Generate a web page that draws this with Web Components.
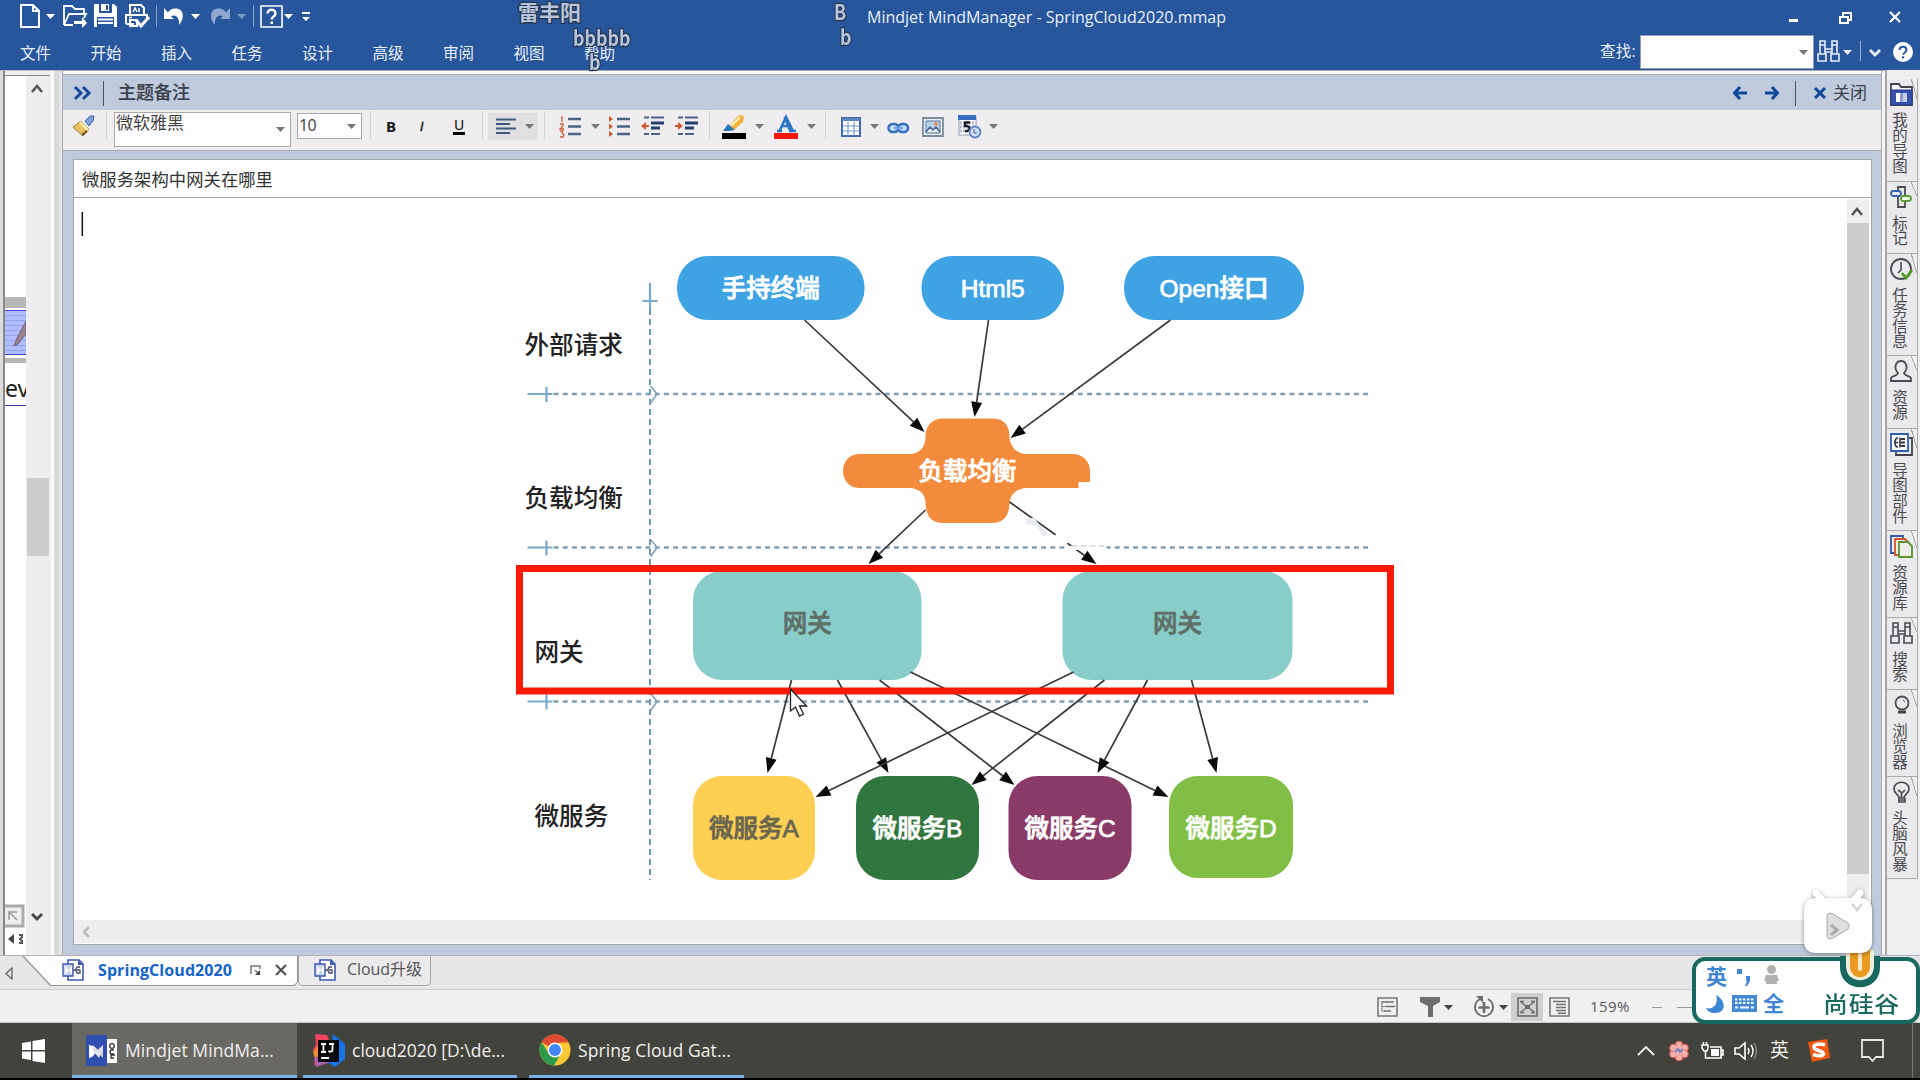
<!DOCTYPE html>
<html lang="zh-CN">
<head>
<meta charset="utf-8">
<title>Mindjet MindManager</title>
<style>
html,body{margin:0;height:1080px;width:1920px;overflow:hidden;background:#e6e6e8}
body{font-family:"Open Sans","Noto Sans CJK SC",sans-serif;position:relative}
</style>
</head>
<body>
<mind-app></mind-app>
<script>
const ICONS={
 newdoc:'<path d="M1 1h12l6 6v16H1zM13 1v6h6" fill="none" stroke="#fff" stroke-width="2"/>',
 car:'<path d="M0 0h9l-4.5 5z" fill="currentColor"/>',
 open:'<path d="M1 21V2h8l3 3h9v4M1 21L6 10h17l-2 4M1 21h9" fill="none" stroke="#fff" stroke-width="1.8"/><path d="M11 17h8v-4l5 6-5 5v-4h-8z" fill="#fff"/>',
 save:'<path d="M0 0h20l3 3v20H0z" fill="#fff"/><path d="M5 0h13v9H5zM3 13h17v10H3z" fill="#27569c"/><path d="M7 0h8v7H7z" fill="#fff"/><path d="M12 1h2v5h-2z" fill="#27569c"/><path d="M4 15.5h15M4 19h15" stroke="#fff" stroke-width="2"/>',
 print:'<path d="M5 11V1h11l3 3v7M1 20v-9h21v5M1 20h8M5 16h7v6H5z" fill="none" stroke="#fff" stroke-width="2"/><path d="M8 8l2-4 2 4M14 4v4M4 13.5h3" stroke="#fff" fill="none" stroke-width="1.5"/><path d="M11 16l5 6 8-9" fill="none" stroke="#fff" stroke-width="3"/>',
 undo:'<path d="M0 1v11h10L7 9.500c4-3 9 1 8 8.500 7-8 4-17-4-16.500-3 0-6 2-7 4z" fill="#fff"/>',
 redo:'<path d="M21 1v11H11l3-2.500c-4-3-9 1-8 8.500C-1 10 2 1 10 1.500c3 0 6 2 7 4z" fill="#8ea8d0"/>',
 help:'<path d="M1 1h21v21H1z" fill="none" stroke="#fff" stroke-width="1.6"/><path d="M7.500 8.500c0-5 8-5 8 0 0 3-3.800 3-3.800 6" fill="none" stroke="#fff" stroke-width="2.400"/><path d="M10.500 16.500h2.500v2.500h-2.500z" fill="#fff"/>',
 cust:'<path d="M0 1h8" stroke="#fff" stroke-width="2"/><path d="M0 5h8L4 9z" fill="#fff"/>',
 min:'<path d="M0 8h9v3H0z" fill="#fff"/>',
 restore:'<path d="M4 4V1h8v7H9M1 5h8v6H1z" fill="none" stroke="#fff" stroke-width="2"/>',
 close:'<path d="M1 1l10 10M11 1L1 11" stroke="currentColor" stroke-width="2.200"/>',
 closeb:'<path d="M1 1l10 10M11 1L1 11" stroke="#0f4798" stroke-width="3"/>',
 bino:'<path d="M3 1h5v4H3zM15 1h5v4h-5zM3 5v9M8 5v9M15 5v9M20 5v9M8 9h7M8 12h7M1 14h8v7H1zM14 14h8v7h-8z" fill="none" stroke="currentColor" stroke-width="1.600"/>',
 vee:'<path d="M1 1l5 5 5-5" fill="none" stroke="currentColor" stroke-width="2.800"/>',
 helpc:'<circle cx="10" cy="10" r="10" fill="#fff"/><path d="M6.500 8c0-4.500 7-4.500 7 0 0 2.500-3.300 2.500-3.300 4.700" fill="none" stroke="#27569c" stroke-width="2"/><path d="M9 14.300h2.200v2.200H9z" fill="#27569c"/>',
 dbl:'<path d="M1 1l6 6-6 6M9 1l6 6-6 6" fill="none" stroke="#17489a" stroke-width="3"/>',
 la:'<path d="M14 7H2M7 1L1.500 7 7 13" fill="none" stroke="#0f4798" stroke-width="3"/>',
 ra:'<path d="M0 7h12M7 1l5.500 6L7 13" fill="none" stroke="#0f4798" stroke-width="3"/>',
 up:'<path d="M1 9l5-6 5 6" fill="none" stroke="#555" stroke-width="2.500"/>',
 brush:'<path d="M12 6l5-5 4 0-1 5-4 5z" fill="#7da3db" stroke="#45649a"/><path d="M8 6l8 8-6 7L0 12z" fill="#e8c262" stroke="#9c7a35"/><path d="M8 6l8 8-2 2-8-8z" fill="#f7e9b4"/><path d="M9 20l5-4" stroke="#6d551d" stroke-width="2"/>',
 align:'<path d="M0 1.500h20M0 6h14M0 10.500h20M0 15h14" stroke="#3f587e" stroke-width="2.200"/>',
 num:'<path d="M8 3h13M8 10.500h13M8 18h13" stroke="#4a6487" stroke-width="2.300"/><path d="M1 2l1-1v5M0 8h3v2L0 13h4M0 15h3l-1 2 2 2-1 2H0" fill="none" stroke="#cf6138" stroke-width="1.300"/>',
 bul:'<path d="M8 3h13M8 10.500h13M8 18h13" stroke="#4a6487" stroke-width="2.300"/><path d="M0 0l4 3-4 3zM0 7.500l4 3-4 3zM0 15l4 3-4 3z" fill="#cf5a30"/>',
 outd:'<path d="M3 1.500h5M10 1.500h13M3 18h5M10 18h9" stroke="#4a6487" stroke-width="2"/><path d="M10 7h13M10 12h9" stroke="#233f6d" stroke-width="3"/><path d="M0 10l5-4v3h3v2H5v3z" fill="#cf5a30"/>',
 ind:'<path d="M3 1.500h5M10 1.500h13M3 18h5M10 18h9" stroke="#4a6487" stroke-width="2"/><path d="M10 7h13M10 12h9" stroke="#233f6d" stroke-width="3"/><path d="M8 10L3 6v3H0v2h3v3z" fill="#cf5a30"/>',
 hl:'<path d="M7 11L17 0l5 1-1 6-9 8z" fill="#f3b23d"/><path d="M9 11L18 2" stroke="#fff1bd" stroke-width="2"/><path d="M6 9l7 6-6 1H1z" fill="#2c76b8"/><path d="M0 18h24v6H0z" fill="#000"/>',
 fc:'<path d="M3 16h5M15 16h7M6 15L12 2l7 14M8 11h8" fill="none" stroke="#2a74c5" stroke-width="2.500"/><path d="M11 2l5 13" stroke="#2a74c5" stroke-width="3"/><path d="M0 18h24v6H0z" fill="#fb1707"/>',
 table:'<path d="M1 1h18v18H1z" fill="#fff" stroke="#4169ad" stroke-width="2"/><path d="M1 1h18v3H1z" fill="#5b83bd"/><path d="M2 9h16M2 14h16M7 5v14M13 5v14" stroke="#7a9bd0" stroke-width="1.200"/>',
 link:'<rect x="1.500" y="2" width="10" height="8" rx="4" fill="#c9defa" stroke="#356fbc" stroke-width="2.600"/><rect x="11" y="2" width="10" height="8" rx="4" fill="#c9defa" stroke="#356fbc" stroke-width="2.600"/><path d="M7 6h9" stroke="#6ea2e8" stroke-width="2.500"/>',
 image:'<path d="M1 1h20v18H1z" fill="#e9eef3" stroke="#7b8b9d" stroke-width="1.800"/><path d="M4 4h14v12H4z" fill="#b8d5f0" stroke="#5d7796"/><path d="M4 15l4-5 3 3 3-3 4 5" fill="#e8f3fc" stroke="#42618c" stroke-width="1.500"/><circle cx="14" cy="7" r="2" fill="#e4905a"/>',
 cal:'<path d="M1 1h17v19H1z" fill="#fff" stroke="#8899b6"/><path d="M0 0h18v5H0z" fill="#376cc4"/><path d="M2 8h14M2 12h14M2 16h14" stroke="#b4bfd4" stroke-width="3" stroke-dasharray="2 1"/><path d="M12 7.500H7V11c6-1 6 6 0 5" fill="none" stroke="#1c1c24" stroke-width="2.300"/><circle cx="17" cy="17" r="5.500" fill="#cfe0f8" stroke="#5b82c0" stroke-width="1.800"/><path d="M16 14v4h3" fill="none" stroke="#36578f"/>',
 mapfold:'<path d="M1 22V1h8l2 3h11v18z" fill="#f6f6f8" stroke="#44444c" stroke-width="1.800"/><path d="M1 7h21v15H1z" fill="#3550ad" stroke="#27398a"/><path d="M6 10h11v9H6z" fill="#fff"/><path d="M10 10v9h3v-9z" fill="#8d9ad2"/><path d="M13 10h4v9h-4z" fill="#c9cfe8"/>',
 marker:'<path d="M8 1h7v20H8z" fill="none" stroke="#4b4b50" stroke-width="1.800"/><rect x="1" y="5" width="10" height="5" rx="2.500" fill="#eef" stroke="#3a61ad" stroke-width="1.800"/><rect x="11" y="10" width="10" height="5" rx="2.500" fill="#efe" stroke="#5f9b37" stroke-width="1.800"/>',
 clock:'<circle cx="11" cy="11" r="10" fill="none" stroke="#4b4b50" stroke-width="1.800"/><path d="M11 4v8l-3 3" fill="none" stroke="#4b4b50" stroke-width="1.600"/><path d="M12 15l4 5 6-8" fill="none" stroke="#4b9926" stroke-width="2.800"/>',
 user:'<path d="M1 21v-3c0-2 7-2 7-5-5-5-2-12 3-12s8 7 3 12c0 3 7 3 7 5v3z" fill="none" stroke="#4b4b50" stroke-width="1.800"/>',
 part:'<path d="M19 5h3v17H6v-3" fill="none" stroke="#44444c" stroke-width="1.800"/><path d="M1 1h17v17H1z" fill="#fff" stroke="#315eb0" stroke-width="1.800"/><path d="M8 5c-4 0-4 9 0 9M4 9.500h4M10 4.500v10" fill="none" stroke="#34343b" stroke-width="1.600"/><path d="M11 6h4M11 9.500h4M11 13h4" stroke="#34343b" stroke-width="2.200"/>',
 lib:'<path d="M1 1h12v17H1z" fill="#eee" stroke="#3558a8" stroke-width="1.800"/><path d="M5 4h10l3 3v13H5z" fill="#eee" stroke="#d4522c" stroke-width="1.800"/><path d="M9 7h9l4 4v11H9z" fill="#eee" stroke="#5b932f" stroke-width="1.800"/>',
 globe:'<circle cx="12" cy="9" r="6.500" fill="none" stroke="#4b4b50" stroke-width="1.800"/><path d="M8 16.500h8v3H8z" fill="#444"/><path d="M13 6l2 2" stroke="#555"/>',
 bulb:'<path d="M9 17c0-4-5-4-5-9 0-9 15-9 15 0 0 5-5 5-5 9zM9 17v4h6v-4M9 19h6M8 9l4 3 3-3M11.500 12v5" fill="none" stroke="#4b4b50" stroke-width="1.700"/>',
 doc:'<path d="M6 1h11l4 4v16H6z" fill="#fff" stroke="#3b58ad" stroke-width="1.600"/><path d="M16 1v5h5z" fill="#3b58ad"/><path d="M1 5h10v12H1z" fill="#cdd3e8" stroke="#3b58ad" stroke-width="1.400"/><path d="M3 7l4 4-4 5zM10 7v9l-3-5z" fill="#fff"/><path d="M11 11h3M18 8h-3q-2 3 0 6h3v-3h-3" fill="none" stroke="#444c66" stroke-width="1.300"/>',
 tri:'<path d="M7 1v11L1 6.500z" fill="none" stroke="#666" stroke-width="1.300"/>',
 pin:'<path d="M1 9V1h9v3M5 5l4 4" fill="none" stroke="#777" stroke-width="1.500"/><path d="M10 5v5H5z" fill="#444"/>',
 s1:'<path d="M1 1h19v18H1z" fill="none" stroke="#777" stroke-width="1.600"/><path d="M4 5h13M9 9.500h9M7 14h7" stroke="#6f6f6f" stroke-width="1.700" fill="none"/><path d="M5 5v10M5 9.500h4M5 14h3" stroke="#8a8a8a" stroke-width="1.200"/>',
 filt:'<path d="M0 0h20v5l-7 4v11H8V9L0 5z" fill="#6d6d6d"/>',
 cplus:'<path d="M7 3a9 9 0 1 0 8 0" fill="none" stroke="#6d6d6d" stroke-width="1.800"/><path d="M11 6v11M5.500 11.500h11" stroke="#6d6d6d" stroke-width="2.600"/><path d="M3 0h7v7z" fill="#6d6d6d"/>',
 s2:'<path d="M1 1h19v18H1z" fill="none" stroke="#6a6a6a" stroke-width="1.600"/><path d="M4 5l5 4M17 5l-5 4M4 15l5-4M17 15l-5-4" fill="none" stroke="#6a6a6a" stroke-width="1.300"/><path d="M3 4.500h4M14 4.500h4M3 15.500h4M14 15.500h4" stroke="#6a6a6a" stroke-width="1.600"/><path d="M8 8h5v4H8z" fill="#6a6a6a"/>',
 s3:'<path d="M1 1h19v18H1z" fill="none" stroke="#777" stroke-width="1.600"/><path d="M4 4.500h13M7 7.500h10M7 10.500h10M7 13.500h10M9 16.200h8" stroke="#6f6f6f" stroke-width="1.500"/>',
 win:'<path d="M0 4l9-1.500V11H0zM10.500 2L23 0v11H10.500zM0 12.500h9V21l-9-1.500zM10.500 12.500H23V24l-12.500-2z" fill="#fff"/>',
 mm:'<path d="M18 4h13v24H18z" fill="#fff"/><path d="M0 0h21v31H0z" fill="#304fae"/><path d="M3 10q5 0 7 6-2 6-7 7z" fill="#fff"/><path d="M10 16l7-6v13z" fill="#c8c8cc"/><path d="M7 10l6 6 4-6v4l-4 9-6-7z" fill="#dfe1ea"/><circle cx="26" cy="11" r="2.300" fill="none" stroke="#333" stroke-width="1.300"/><path d="M28 15h-3q-2 2 0 4h3M29 20h-4v3h3" fill="none" stroke="#333" stroke-width="1.300"/>',
 ij:'<path d="M2 0l12 1 4 10-8 12-9 9 1-10-2-7 3-4z" fill="#f0435f"/><path d="M0 18l5-6 6 10-9 2z" fill="#f58a2a"/><path d="M1 24l10-4 7 8-15 5z" fill="#a862b0"/><path d="M20 0l12 10v15l-10 8-9-6 6-14z" fill="#1773e6"/><path d="M5 6h21v22H5z" fill="#08080a"/><path d="M8 10h5M10.500 10v8M8 18h5M16 10h5M19.500 10v6c0 2-3 2-4 1M8 24h8" fill="none" stroke="#fff" stroke-width="1.800"/>',
 chrome:'<circle cx="16" cy="16" r="15.500" fill="#fcc934"/><path d="M16 16L2.600 8.200A15.500 15.500 0 0 1 29.400 8.200L16 9z" fill="#e04a34"/><path d="M2.600 8.200A15.500 15.500 0 0 0 15 31.500L22 19.500 10 19.500z" fill="#2d9a4b"/><circle cx="16" cy="16" r="7.500" fill="#fff"/><circle cx="16" cy="16" r="6" fill="#4285f4"/>',
 chev:'<path d="M1 10l8-8 8 8" fill="none" stroke="#f1f1f1" stroke-width="1.800"/>',
 flower:'<g fill="#f7b4ad" stroke="#e45a55" stroke-width="1"><circle cx="10" cy="4" r="3.800"/><circle cx="15.500" cy="7" r="3.800"/><circle cx="15.500" cy="13" r="3.800"/><circle cx="10" cy="16" r="3.800"/><circle cx="4.500" cy="13" r="3.800"/><circle cx="4.500" cy="7" r="3.800"/></g><circle cx="10" cy="10" r="5.500" fill="#f4aca9"/><path d="M6 11l3-3 2 3 3-3" stroke="#6a83c9" stroke-width="1.800" fill="none"/>',
 batt:'<path d="M9 5h11v11H8M20 8h2v5h-2" fill="none" stroke="#fff" stroke-width="1.600"/><path d="M10 7h8v7h-8z" fill="#fff"/><path d="M1 3h6v3L6 9H3L1 6zM2.500 0v3M5.500 0v3M4.500 9v7H9" fill="none" stroke="#fff" stroke-width="1.500"/>',
 spk:'<path d="M1 7h4l6-5v16l-6-5H1z" fill="none" stroke="#fff" stroke-width="1.600"/><path d="M14 7q2 3 0 6M17 4q4 6 0 12" fill="none" stroke="#fff" stroke-width="1.400"/><path d="M20 2q5 8 0 16" fill="none" stroke="#8a8a86" stroke-width="1.400"/>',
 sogou:'<path d="M1 3L20 0l3 19-18 4z" fill="#f2560f"/><path d="M18 6C8 3 4 8 9 10.500c6 2 10 4 6 6-3 1-6 0-9-1" fill="none" stroke="#fff" stroke-width="3.500"/>',
 notif:'<path d="M1 1h21v17h-7l-3.500 4L8 18H1z" fill="none" stroke="#e6e6e4" stroke-width="1.800"/>',
 punc:'<path d="M0 0h5v5H0z" fill="#4289d4"/><path d="M9 7h4v5l-3 5H8l2-5H9z" fill="#4289d4"/>',
 person:'<circle cx="7.500" cy="4.500" r="4.500" fill="#b0b0b0"/><path d="M2 10h11l2 6h-2v3H2v-3H0z" fill="#b0b0b0"/>',
 moon:'<path d="M10 0c10 5 11 18-1 18-4 0-8-2-9-5 7 2 13-4 10-13z" fill="#3e86d4"/>',
 kb:'<path d="M0 0h25v17H0z" fill="#4289d4"/><path d="M3 4.500h19M3 8h19" stroke="#fff" stroke-width="2" stroke-dasharray="2.500 1.500"/><path d="M3 12.500h3M8 12.500h9M19 12.500h3" stroke="#fff" stroke-width="2"/>',
 diag:'<path d="M1 1h20v20H1z" fill="#ededed" stroke="#aaa" stroke-width="3"/><path d="M7 15V7h8M7 7l8 8" fill="none" stroke="#999" stroke-width="1.500"/>',
 lr:'<path d="M6 1v10L0 6z" fill="#444"/><path d="M11 2h3v2l-2 2 2 2v2h-3" fill="none" stroke="#555" stroke-width="2"/>'
};
const define=(name,html,ready)=>customElements.define(name,class extends HTMLElement{
  connectedCallback(){
    if(this.shadowRoot)return;
    const t=document.createElement('template');
    t.innerHTML=html;
    this.attachShadow({mode:'open'}).append(t.content.cloneNode(true));
    if(ready)ready(this);
  }
});
const I=(n,w,h,m=0,c='')=>`<ui-icon n="${n}" w="${w}" h="${h}" m="${m}" style="${c}"></ui-icon>`;
const T=(t,w,m=0,c='')=>`<fit-text w="${w}" m="${m}" style="${c}">${t}</fit-text>`;
const S=(m,h,c)=>`<i style="flex:none;width:1px;height:${h}px;margin-left:${m}px;background:${c}"></i>`;

define('mind-app',`<style>
:host{display:flex;flex-direction:column;width:1920px;height:1080px;position:relative}
.mid{display:flex;height:885px;flex:none}
</style>
<title-bar></title-bar><menu-bar></menu-bar>
<div class="mid"><map-rail></map-rail><note-panel></note-panel><side-tabs></side-tabs></div>
<doc-tabs></doc-tabs><status-bar></status-bar><task-bar></task-bar>
<float-layer></float-layer>`);

define('title-bar',`<style>:host{display:flex;align-items:center;height:32px;flex:none;background:#27569c;color:#fff;padding-left:20px;box-sizing:border-box}</style>
${I('newdoc',20,24)}${I('car',9,5,6)}${I('open',24,24,8)}${I('save',24,24,7)}${I('print',24,24,7)}${S(7,22,'#86a0ca')}${I('undo',21,18,7)}${I('car',9,5,6)}${I('redo',21,18,9)}${I('car',9,5,7,'color:#7f9cc9')}${S(7,22,'#86a0ca')}${I('help',23,23,6)}${I('car',9,5,1)}${I('cust',8,9,9)}
${T('Mindjet MindManager - SpringCloud2020.mmap',359,557,'font-size:16px;color:#e9eef7;position:relative;top:1px')}${I('min',10,12,563,'position:relative;top:1px')}${I('restore',13,12,40,'position:relative;top:2px')}${I('close',12,12,37,'position:relative;top:1px')}`);

define('menu-bar',`<style>:host{display:flex;align-items:center;height:38px;flex:none;background:#27569c;color:#e9eef7;padding-left:20px;box-sizing:border-box;font-size:15.500px}
.s{width:174px;height:34px;margin:2px 0 0 4px;background:#fdfdff;border:1px solid #8f9bb3;box-sizing:border-box;display:flex;align-items:center;justify-content:flex-end;padding-right:6px;color:#777}</style>
${['文件','开始','插入','任务','设计','高级','审阅','视图','帮助'].map((t,i)=>T(t,31,i?39.5:0,'position:relative;top:3px')).join('')}
${T('查找:',36,985,'position:relative;top:1px')}<div class="s">${I('car',8,5)}</div>${I('bino',23,22,3)}${I('car',8,5,3,'position:relative;top:1px')}${S(9,20,'#9db2d6')}${I('vee',12,8,8,'position:relative;top:2px')}${I('helpc',20,20,12,'position:relative;top:1px')}`);

define('map-rail',`<style>
:host{display:flex;width:62px;flex:none;background:linear-gradient(90deg,#dcdcde 0 3px,#8b8789 3px 5px,#f0eff1 5px 51px,#fbfbfb 51px 54px,#d9dbda 54px 59px,#e4e4e4 59px);border-top:1px solid #b9b9bd;box-sizing:border-box}
.c{width:21px;margin:4px 0 0 5px;background:#fff;display:flex;flex-direction:column;overflow:hidden;border-top:1px solid #8b8789;font-family:"Noto Sans"}
.c *{flex:none}.bar{background:#b7b7b7}
.b{flex:1;margin-top:4px;margin-right:12px;border-top:1px solid #8b8789;background:#efedf0;display:flex;flex-direction:column;align-items:center;color:#444}
.n{height:45px;margin:2px 0 3px;background:repeating-linear-gradient(#b0bdff 0 4px,#939fef 4px 5px);border:solid #4141c4;border-width:1px 0;box-sizing:border-box}
.th{width:22px;height:78px;margin-top:383px;background:#cdcdcd}
</style>
<div class="c"><div class="bar" style="height:11px;margin-top:221px"></div><div class="n"><svg width="21" height="43"><path d="M9 35l3-8L21 10v13L13 33z" fill="#99838e" stroke="#6e6478"/></svg></div><div class="bar" style="height:5px"></div>
<div style="font-size:23px;line-height:28px;height:28px;margin-top:11px;color:#222">ev</div><div style="height:1px;background:#333a9c;margin-top:3px"></div>
<div style="margin:499px 0 0 -3px">${I('diag',22,22)}</div><div style="margin:6px 0 0 3px">${I('lr',18,12)}</div></div>
<div class="b">${I('up',12,12,0,'margin-top:7px;margin-right:2px')}<div class="th"></div>${I('vee',12,8,0,'margin-top:357px;margin-right:2px')}</div>`);

define('note-panel',`<style>
:host{display:flex;flex-direction:column;width:1825px;flex:none;height:885px;box-sizing:border-box;border-top:1px solid #aaa;padding-right:6px;background:linear-gradient(90deg,#a9abb0 0 1px,#bfcbdd 1px 1819px,#a9abb0 1819px 1820px,#f5f5f5 1820px 1823px,#a6a6a9 1823px)}
.h{height:39px;flex:none;margin-left:1px;width:1818px;display:flex;align-items:center;border-top:3px solid #f6f6f8;box-shadow:inset 0 1px #aaa;box-sizing:border-box;color:#3b414a;padding:2px 0 0 11px}
.t{height:41px;flex:none;margin-left:1px;width:1818px;background:#efedf0;border-bottom:1px solid #aaabb0;display:flex;box-sizing:border-box;padding-left:10px;align-items:flex-start;color:#777}
.t>*{flex:none}
.cb{height:35px;border:1px solid #a9a9ac;box-sizing:border-box;background:#fdfcfe;display:flex;margin:2px 0 0 7px;color:#444;padding-left:1px}
.bx{margin:8px 0 0 11px;width:1799px;height:786px;flex:none;box-sizing:border-box;border:1px solid #a4a6aa;background:#fefefe;display:flex;flex-direction:column}
.tt{height:38px;border-bottom:1px solid #a4a4a4;box-sizing:border-box;padding:3px 0 0 8px;display:flex;align-items:center;color:#333;flex:none}
.r{display:flex;height:722px;flex:none}
.sb{width:22px;background:#efedf0;margin-top:1px;display:flex;flex-direction:column;align-items:center}
.hs{height:23px;background:#efedf0;display:flex;align-items:center;padding-left:8px;margin-right:2px}
</style>
<div class="h">${I('dbl',17,14)}${S(12,25,'#4a5260')}${T('主题备注',72,14,'font-size:18px;font-weight:500;-webkit-text-stroke:.2px #3b414a')}${I('la',14,14,1543)}${I('ra',14,14,18)}${S(16,25,'#4a5260')}${I('closeb',12,12,18)}${T('关闭',34,7,'font-size:17px')}</div>
<div class="t">${I('brush',22,22,0,'margin-top:5px')}<i style="width:1px;height:29px;background:#d4d4d6;margin:1px 0 0 11px"></i>
<div class="cb" style="width:177px">${T('微软雅黑',68,0,'font-size:17px;margin-top:-2px')}${I('car',8,5,92,'margin-top:14px;color:#777')}</div>
<div class="cb" style="width:65px;height:26px;margin:3px 0 0 6px">${T('10',17,0,'font-size:16px;margin-top:0')}${I('car',8,5,31,'margin-top:10px;color:#777')}</div>
<i style="width:1px;height:29px;background:#d4d4d6;margin:1px 0 0 8px"></i>
<span style="font:bold 13.500px 'DejaVu Sans';color:#222;width:14px;margin:9px 0 0 15px">B</span><span style="font:italic 13px 'DejaVu Sans';color:#222;width:10px;margin:9px 0 0 20px;-webkit-text-stroke:.4px">I</span><span style="font:14px 'DejaVu Sans';color:#222;width:12px;margin:8px 0 0 23px;border-bottom:3px solid #000;line-height:14px;text-align:center">U</span>
<i style="width:1px;height:29px;background:#d4d4d6;margin:1px 0 0 17px"></i>
<div style="background:#e1dfe1;width:50px;height:27px;margin:3px 0 0 5px;display:flex;align-items:center">${I('align',20,17,8)}${I('car',8,5,9)}</div>
<i style="width:1px;height:29px;background:#d4d4d6;margin:1px 0 0 6px"></i>
${I('num',21,21,15,'margin-top:6px')}${I('car',8,5,10,'margin-top:14px')}${I('bul',21,21,10,'margin-top:6px')}${I('outd',24,20,11,'margin-top:6px')}${I('ind',24,20,10,'margin-top:6px')}
<i style="width:1px;height:29px;background:#d4d4d6;margin:1px 0 0 10px"></i>
${I('hl',24,24,12,'margin-top:5px')}${I('car',8,5,9,'margin-top:14px')}${I('fc',24,24,11,'margin-top:5px')}${I('car',8,5,9,'margin-top:14px')}
<i style="width:1px;height:29px;background:#d4d4d6;margin:1px 0 0 10px"></i>
${I('table',20,20,15,'margin-top:7px')}${I('car',8,5,9,'margin-top:14px')}${I('link',23,12,9,'margin-top:12px')}${I('image',23,20,12,'margin-top:7px')}${I('cal',24,23,13,'margin-top:5px')}${I('car',8,5,7,'margin-top:14px')}</div>
<div class="bx"><div class="tt">${T('微服务架构中网关在哪里',191,0,'font-size:17.300px')}</div>
<div class="r"><arch-diagram></arch-diagram><div class="sb">${I('up',12,12,0,'margin-top:7px;margin-right:2px')}<div style="width:22px;height:651px;background:#cdcdcd;margin-top:5px"></div></div></div>
<div class="hs"><svg width="9" height="12"><path d="M7 1L2 6l5 5" fill="none" stroke="#bbb" stroke-width="2.500"/></svg></div></div>`);

const txt=(cx,y,t,c)=>`<text x="${cx}" y="${y}" text-anchor="middle" fill="${c}" stroke="${c}" stroke-width=".75" font-size="24.500" font-weight="500">${t}</text>`;
const node=(x,y,w,h,r,f,t,c,dy=9)=>`<rect x="${x}" y="${y}" width="${w}" height="${h}" rx="${r}" fill="${f}"/>`+txt(x+w/2,y+h/2+dy,t,c);
const arr=a=>a.map(([x1,y1,x2,y2])=>{const L=Math.hypot(x2-x1,y2-y1),u=(x2-x1)/L,v=(y2-y1)/L,bx=x2-u*15,by=y2-v*15;
 return `<path d="M${x1} ${y1}L${bx} ${by}" stroke="#3a3a3a" stroke-width="1.700"/><path d="M${x2} ${y2}L${bx-v*5.5} ${by+u*5.5}L${bx+v*5.5} ${by-u*5.5}z" fill="#0a0a0a"/>`}).join('');
const lab=(x,y,t)=>`<text x="${x}" y="${y}" font-size="24.600" font-weight="500" fill="#222">${t}</text>`;
const hl=y=>`<path d="M554 ${y}H1370" stroke="#7f9fb6" stroke-width="2.600" stroke-dasharray="5 4.200"/><path d="M528 ${y}h25M547 ${y-7}v15" stroke="#7ba8c6" stroke-width="2.200"/><path d="M651 ${y-8}l6 7M657 ${y+1}l-6 8" stroke="#7f9fb6" stroke-width="1.500"/>`;
define('arch-diagram',`<style>:host{display:block;width:1773px;height:722px}svg{display:block}text{font-family:"Liberation Sans","Noto Sans CJK SC",sans-serif}</style>
<svg width="1773" height="722" viewBox="74.500 198 1773 722">
<path d="M82.800 212v24" stroke="#111" stroke-width="1.500"/>
<path d="M650.500 309V880" stroke="#6d98b2" stroke-width="2" stroke-dasharray="6 4"/><path d="M650.500 283v26M643 301h15" stroke="#7ba8c6" stroke-width="2.200"/>
${hl(394)}${hl(547.5)}${hl(701.5)}
${lab(525,354,'外部请求')}${lab(525,507,'负载均衡')}${lab(535,661,'网关')}${lab(535,825,'微服务')}
${node(677.500,256,187.500,64,31,'#3fa3e3','手持终端','#fff')}${node(922,256,142.500,64,31,'#3fa3e3','Html5','#fff')}${node(1124.500,256,180,64,31,'#3fa3e3','Open接口','#fff')}
<path d="M860 454H912Q925 452 926 438C926 424 934 418.500 944 418.500H992C1004 418.500 1010 424 1010 438Q1012 452 1025 454H1073C1084 454 1090.500 462 1090.500 471V482H1079V488H1025Q1012 490 1010 502C1010 516 1004 523 992 523H944C932 523 926 516 926 502Q925 490 912 488H860C838 488 838 454 860 454z" fill="#f28b3b"/>
${txt(968,480,'负载均衡','#fff')}
${arr([[805,320,925,432],[989,320,975,417],[1171,320,1011,438],[926,510,869,564],[1010,502,1097,564]])}
<path d="M1056 535l12 8" stroke="#fefefe" stroke-width="6"/><path d="M1027 518l8 0 6 8 8 9-5 1-7-10-11-2z" fill="#e8ebf0"/>
<path d="M1065 548h42" stroke="#fefefe" stroke-width="4"/><path d="M1072 546h34" stroke="#d9e1e8" stroke-width="2" stroke-dasharray="6 3"/>
${node(693.500,571,228.500,109,29,'#89cdca','网关','#5f7069',6)}${node(1063,571,230,109,29,'#89cdca','网关','#5f7069',6)}
${arr([[792,680,768,773],[838,680,889,773],[880,680,1015,785],[911,672,1169,797],[1074,672,816,797],[1105,680,972,785],[1148,680,1098,773],[1192,680,1217,773]])}
${node(693.500,776,122,104,29,'#fdcf53','微服务A','#6b6650')}${node(856.500,776,123,104,29,'#31753f','微服务B','#fff')}${node(1009,776,123,104,29,'#893a67','微服务C','#fff')}${node(1169.500,776,124,102,29,'#80be45','微服务D','#fff',10)}
<rect x="520" y="568.500" width="871" height="122.500" fill="none" stroke="#fb1b04" stroke-width="7"/>
<path d="M791 689v22l5-4 4 9 4-2-4-8h7z" fill="#fff" stroke="#222" stroke-width="1.300"/>
</svg>`);

const tabs=[['mapfold','我的导图',103],['marker','标记',72],['clock','任务信息',102],['user','资源',73],['part','导图部件',102],['lib','资源库',87],['bino','搜索',72],['globe','浏览器',87],['bulb','头脑风暴',102]];
define('side-tabs',`<style>:host{display:block;width:33px;height:885px;background:#efeef1;padding-top:9px;box-sizing:border-box}
.t{width:31px;box-sizing:border-box;display:flex;flex-direction:column;padding:4px 0 0 3px;color:#4b4b50;background:linear-gradient(to bottom left,transparent 0 5px,#aaa 5px 6px,#eae9ec 6px);border-right:1px solid #aaa;border-bottom:1px solid #aaa}
.v{writing-mode:vertical-rl;text-orientation:upright;font-size:15.500px;line-height:18px;width:18px;margin-top:6px}</style>
${tabs.map(([n,t,h])=>`<div class="t" style="height:${h}px">${I(n,23,23)}<span class="v">${t}</span></div>`).join('')}`);

define('doc-tabs',`<style>:host{display:flex;height:35px;flex:none;background:#e6e6e8;border-top:1px solid #b4b4b6;border-bottom:1px solid #ccc;box-sizing:border-box;align-items:flex-start}
.l{width:22px;padding:11px 0 0 5px;box-sizing:border-box}
.a{width:276px;height:30px;display:flex;align-items:center;background:#999;clip-path:polygon(0 0,100% 0,100% 26px,273px 100%,28px 100%);flex:none}
.w{width:276px;height:30px;background:#fdfdfe;clip-path:polygon(2px 0,275px 0,275px 26px,272px 29px,29px 29px);display:flex;align-items:center;color:#1565c8;padding-bottom:2px;box-sizing:border-box}
.b{width:133px;height:30px;border:1px solid #a8a8a8;border-top:0;border-radius:0 0 5px 5px;box-sizing:border-box;background:#ebebed;display:flex;align-items:center;color:#555;padding-bottom:2px}</style>
<div class="l">${I('tri',9,13)}</div><div class="a"><div class="w">${I('doc',22,22,40)}${T('SpringCloud2020',134,14,'font-size:16px;font-weight:700')}${I('pin',11,11,18)}${I('close',12,12,14,'color:#555')}</div></div>
<div class="b">${I('doc',22,22,15)}${T('Cloud升级',75,11,'font-size:16px')}</div>`);

define('status-bar',`<style>:host{display:flex;height:33px;flex:none;background:#f0f0f0;border-bottom:1px solid #c8c8c8;box-sizing:border-box;align-items:center;padding:2px 0 0 1377px;color:#444}
.k{background:#cfcfcf;width:32px;height:28px;margin-left:4px;display:flex;align-items:center;justify-content:center;flex:none}</style>
${I('s1',21,20)}${I('filt',20,20,22)}${I('car',8,5,4)}${I('cplus',22,22,21)}${I('car',8,5,4)}<div class="k">${I('s2',21,20)}</div>${I('s3',21,20,6)}${T('159%',40,20,'font-size:15px;color:#5a5560;position:relative;top:-1px')}<i style="width:10px;height:1px;background:#999;margin-left:22px"></i><i style="width:20px;height:1px;background:#999;margin-left:15px"></i>`);

define('task-bar',`<style>:host{display:flex;height:57px;flex:none;background:#43433d;border-bottom:2px solid #000;box-sizing:border-box;align-items:center;color:#f0f0ee;font-size:17.500px}
.b{height:55px;box-sizing:border-box;border-bottom:3px solid #76b0e8;display:flex;align-items:center;padding-top:2px;flex:none}</style>
${I('win',23,24,22)}<div class="b" style="width:225px;margin-left:27px;background:#6a6863">${I('mm',31,31,14)}${T('Mindjet MindMa...',149,8)}</div>
<div class="b" style="width:214px;margin-left:6px">${I('ij',33,33,10)}${T('cloud2020 [D:\\de...',153,6)}</div>
<div class="b" style="width:215px;margin-left:12px">${I('chrome',32,32,10)}${T('Spring Cloud Gat...',153,7)}</div>
${I('chev',18,12,893)}${I('flower',20,20,14)}${I('batt',23,18,12)}${I('spk',24,20,10)}${T('英',20,12,'font-size:19px')}${I('sogou',24,24,17)}${I('notif',23,23,30)}${S(28,55,'#77776f')}`);

define('float-layer',`<style>:host{position:absolute;inset:0;pointer-events:none;display:block}
.d{position:absolute;font:700 21px/24px "Noto Sans CJK SC";color:#b7c4d9;-webkit-text-stroke:2.500px #253650;paint-order:stroke fill;white-space:nowrap;transform-origin:0 0}
.im{position:absolute;left:1692px;top:957px;width:228px;height:67px;box-sizing:border-box;border:4px solid #17685e;border-radius:13px;background:#fff;display:flex}
.g{display:grid;grid-template-columns:26px 31px 24px;grid-template-rows:25px 29px;align-items:center;padding:3px 0 0 10px;color:#3e86d4;font-weight:700;font-size:21px}
.u{position:absolute;left:1838px;top:942px}.tv{position:absolute;left:1794px;top:880px}
.n{margin:25px 0 0 36px;color:#17685e;font-size:25px;font-weight:500;transform:scaleY(.86);height:36px}</style>
<span class="d" style="left:518px;top:-1px">雷丰阳</span><span class="d" style="left:573px;top:25px;transform:scaleX(.85)">bbbbb</span><span class="d" style="left:589px;top:49px;transform:scaleX(.85)">b</span><span class="d" style="left:834px;top:-1px;transform:scaleX(.85)">B</span><span class="d" style="left:840px;top:24px;transform:scaleX(.85)">b</span>
<div class="im"><div class="g">${T('英',21)}${I('punc',13,16,5)}${I('person',15,19,1,'margin-top:-5px')}${I('moon',18,18)}${I('kb',25,17)}${T('全',21)}</div><div class="n">${T('尚硅谷',77)}</div></div>
<svg class="u" width="44" height="48"><path d="M2 14V25C2 52 42 52 42 25V14z" fill="#17685e"/><path d="M8 8V24C8 43 36 43 36 24V8z" fill="#f1efe0"/><path d="M12 6V24C12 39 32 39 32 24V6z" fill="#ea9b20"/><path d="M22 8V27" stroke="#f6e9cc" stroke-width="4" stroke-linecap="round"/></svg>
<svg class="tv" width="90" height="80" style="filter:drop-shadow(0 1px 2px #0006)"><path d="M28 20L22 13M60 20L66 13" stroke="#fff" stroke-width="7" stroke-linecap="round"/><path d="M22 18H66Q78 18 78 30V61Q78 73 66 73H22Q10 73 10 61V30Q10 18 22 18z" fill="#fdfdfd"/><path d="M36 33Q33 33 33 37V55Q33 61 39 58L54 49Q57 46 54 43L39 34z" fill="#dedede" stroke="#aaa"/><path d="M37 45l6 5-6 5" fill="none" stroke="#aaa" stroke-width="3"/><path d="M58 24l5 6 5-6" fill="none" stroke="#d4d4d4" stroke-width="2.500"/></svg>`);

define('ui-icon',`<style>:host{display:block;flex:none}svg{display:block;overflow:visible}</style><svg></svg>`,el=>{
  const s=el.shadowRoot.querySelector('svg'),w=el.getAttribute('w'),h=el.getAttribute('h');
  s.setAttribute('width',w);s.setAttribute('height',h);s.innerHTML=ICONS[el.getAttribute('n')];
  el.style.width=w+'px';el.style.height=h+'px';
  if(+el.getAttribute('m'))el.style.marginLeft=el.getAttribute('m')+'px';
});
define('fit-text',`<style>:host{display:block;flex:none;white-space:pre;line-height:1.4}span{display:inline-block}</style><span><slot></slot></span>`,el=>{
  const w=+el.getAttribute('w'),n=[...el.textContent].length,nat=el.shadowRoot.querySelector('span').getBoundingClientRect().width;
  el.style.width=w+'px';
  if(+el.getAttribute('m'))el.style.marginLeft=el.getAttribute('m')+'px';
  if(n>1)el.style.letterSpacing=((w-nat)/n).toFixed(3)+'px';
});
</script>
</body>
</html>
